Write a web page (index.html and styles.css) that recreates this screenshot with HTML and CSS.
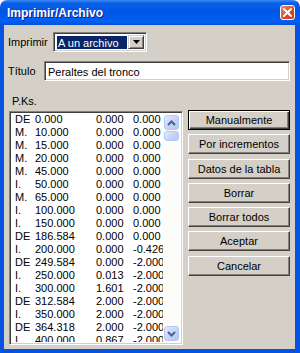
FILE: index.html
```html
<!DOCTYPE html>
<html lang="es">
<head>
  <meta charset="UTF-8"/>
  <title>Imprimir/Archivo</title>
  <link rel="stylesheet" href="styles.css">
</head>
<body>
<div class="window">
  <!-- Title bar -->
  <div class="titlebar">
    <span class="title">Imprimir/Archivo</span>
    <span class="close">
      <svg width="9" height="9" viewBox="0 0 9 9"><path d="M1 1 L8 8 M8 1 L1 8" stroke="#fff" stroke-width="2" stroke-linecap="square"/></svg>
    </span>
  </div>

  <div class="frame">
    <div class="client">
      <!-- Print target -->
      <div class="line-print">
        <span class="label label-print">Imprimir</span>
        <div class="combo sunken">
          <span class="combo-value">A un archivo</span>
          <span class="combo-btn raised">
            <svg width="7" height="4" viewBox="0 0 7 4"><path d="M0 0 H7 L3.5 4 Z" fill="#000"/></svg>
          </span>
        </div>
      </div>

      <!-- Title field -->
      <div class="line-title">
        <span class="label label-title">Título</span>
        <div class="field sunken">Peraltes del tronco</div>
      </div>

      <div class="pks">P.Ks.</div>

      <div class="main">
        <!-- Station list -->
        <div class="listbox sunken">
          <div class="items">
            <div class="item"><span>DE</span><span>0.000</span><span>0.000</span><span>0.000</span></div>
            <div class="item"><span>M.</span><span>10.000</span><span>0.000</span><span>0.000</span></div>
            <div class="item"><span>M.</span><span>15.000</span><span>0.000</span><span>0.000</span></div>
            <div class="item"><span>M.</span><span>20.000</span><span>0.000</span><span>0.000</span></div>
            <div class="item"><span>M.</span><span>45.000</span><span>0.000</span><span>0.000</span></div>
            <div class="item"><span>I.</span><span>50.000</span><span>0.000</span><span>0.000</span></div>
            <div class="item"><span>M.</span><span>65.000</span><span>0.000</span><span>0.000</span></div>
            <div class="item"><span>I.</span><span>100.000</span><span>0.000</span><span>0.000</span></div>
            <div class="item"><span>I.</span><span>150.000</span><span>0.000</span><span>0.000</span></div>
            <div class="item"><span>DE</span><span>186.584</span><span>0.000</span><span>0.000</span></div>
            <div class="item"><span>I.</span><span>200.000</span><span>0.000</span><span>-0.426</span></div>
            <div class="item"><span>DE</span><span>249.584</span><span>0.000</span><span>-2.000</span></div>
            <div class="item"><span>I.</span><span>250.000</span><span>0.013</span><span>-2.000</span></div>
            <div class="item"><span>I.</span><span>300.000</span><span>1.601</span><span>-2.000</span></div>
            <div class="item"><span>DE</span><span>312.584</span><span>2.000</span><span>-2.000</span></div>
            <div class="item"><span>I.</span><span>350.000</span><span>2.000</span><span>-2.000</span></div>
            <div class="item"><span>DE</span><span>364.318</span><span>2.000</span><span>-2.000</span></div>
            <div class="item"><span>I.</span><span>400.000</span><span>0.867</span><span>-2.000</span></div>
          </div>
          <div class="scrollbar">
            <div class="sb-btn">
              <svg width="9" height="6" viewBox="0 0 9 6"><path d="M1 5 L4.5 1.5 L8 5" fill="none" stroke="#4d6185" stroke-width="2"/></svg>
            </div>
            <div class="sb-thumb"></div>
            <div class="sb-track"></div>
            <div class="sb-btn">
              <svg width="9" height="6" viewBox="0 0 9 6"><path d="M1 1 L4.5 4.5 L8 1" fill="none" stroke="#4d6185" stroke-width="2"/></svg>
            </div>
          </div>
        </div>

        <!-- Actions -->
        <div class="buttons">
          <button class="btn default">Manualmente</button>
          <button class="btn">Por incrementos</button>
          <button class="btn">Datos de la tabla</button>
          <button class="btn">Borrar</button>
          <button class="btn">Borrar todos</button>
          <button class="btn">Aceptar</button>
          <button class="btn">Cancelar</button>
        </div>
      </div>
    </div>
  </div>
</div>
</body>
</html>
```

FILE: styles.css
```css
/* Page and window frame */
body {
    margin: 0;
    overflow: hidden;
    font-family: "Liberation Sans", Arial, sans-serif;
    font-size: 11px;
    color: #000;
}

.window {
    width: 300px;
    height: 353px;
    display: flex;
    flex-direction: column;
}

/* XP style title bar */
.titlebar {
    height: 25px;
    display: flex;
    align-items: center;
    justify-content: space-between;
    padding: 0 5px 0 7px;
    background: linear-gradient(to bottom, #3d8cf5 0%, #0a5fe8 12%, #0055e5 45%, #0060f5 85%, #0050dc 100%);
    border-radius: 7px 7px 0 0;
    box-sizing: border-box;
}

.title {
    color: #fff;
    font-weight: bold;
    font-size: 12px;
    padding-top: 1px;
    text-shadow: 1px 1px #0a1e8c;
}

.close {
    width: 15px;
    height: 15px;
    box-sizing: border-box;
    border: 1px solid #fff;
    border-radius: 3px;
    background: linear-gradient(135deg, #f08a60, #e0451c 60%, #c73a12);
    display: flex;
    align-items: center;
    justify-content: center;
}

.frame {
    flex: 1;
    background: #0553e0;
    padding: 0 5px 4px 4px;
    display: flex;
    min-width: 0;
}

.client {
    flex: 1;
    min-width: 0;
    background: #d4d0c8;
    padding: 7px 5px 0 4px;
    display: flex;
    flex-direction: column;
}

/* Classic 3D borders */
.sunken {
    box-sizing: border-box;
    border: 1px solid;
    border-color: #808080 #fff #fff #808080;
    box-shadow: inset 1px 1px #404040, inset -1px -1px #d4d0c8;
    background: #fff;
}

.raised {
    box-sizing: border-box;
    border: 1px solid;
    border-color: #d4d0c8 #404040 #404040 #d4d0c8;
    box-shadow: inset 1px 1px #fff, inset -1px -1px #808080;
    background: #d4d0c8;
}

/* Top rows */
.line-print,
.line-title {
    display: flex;
    align-items: center;
}

.label-print {
    width: 45px;
}

.label-title {
    width: 36px;
}

.combo {
    width: 94px;
    height: 20px;
    padding: 2px;
    display: flex;
    align-items: stretch;
}

.combo-value {
    flex: 1;
    margin: 1px 1px 0 1px;
    background: #0a246a;
    color: #fff;
    padding-left: 1px;
    line-height: 15px;
}

.combo-btn {
    width: 16px;
    display: flex;
    align-items: center;
    justify-content: center;
}

.line-title {
    margin-top: 9px;
}

.field {
    flex: 1;
    height: 20px;
    line-height: 16px;
    padding: 2px 3px;
}

.pks {
    margin-top: 14px;
    padding-left: 4px;
    line-height: 13px;
    height: 13px;
}

/* List and buttons */
.main {
    display: flex;
    margin-top: 3px;
    gap: 5px;
    padding-left: 1px;
}

.listbox {
    width: 174px;
    height: 234px;
    padding: 2px;
    display: flex;
}

.items {
    flex: 1;
    overflow: hidden;
    margin-top: -1px;
}

.item {
    display: grid;
    grid-template-columns: 20px 61px 37px auto;
    padding-left: 3px;
    line-height: 13px;
    white-space: nowrap;
}

.scrollbar {
    width: 17px;
    display: flex;
    flex-direction: column;
    background: #fcfcf8;
}

.sb-btn,
.sb-thumb {
    box-sizing: border-box;
    margin: 1px;
    border: 1px solid #b5c8f5;
    border-radius: 3px;
    background: linear-gradient(135deg, #e3ebfe, #c2d3fb 55%, #b3c7f6);
}

.sb-btn {
    height: 15px;
    display: flex;
    align-items: center;
    justify-content: center;
}

.sb-thumb {
    height: 10px;
    margin-top: 0;
}

.sb-track {
    flex: 1;
}

.buttons {
    width: 102px;
    margin-top: -1px;
    display: flex;
    flex-direction: column;
    gap: 4.3px;
}

.btn {
    height: 20px;
    padding: 0;
    font-family: inherit;
    font-size: 11px;
    color: #000;
    background: #d4d0c8;
    border: 1px solid;
    border-color: #fff #404040 #404040 #fff;
    box-shadow: inset -1px -1px #808080;
}

.btn.default {
    border-color: #000;
    box-shadow: inset 1px 1px #fff, inset -1px -1px #404040, inset -2px -2px #808080;
}
```
